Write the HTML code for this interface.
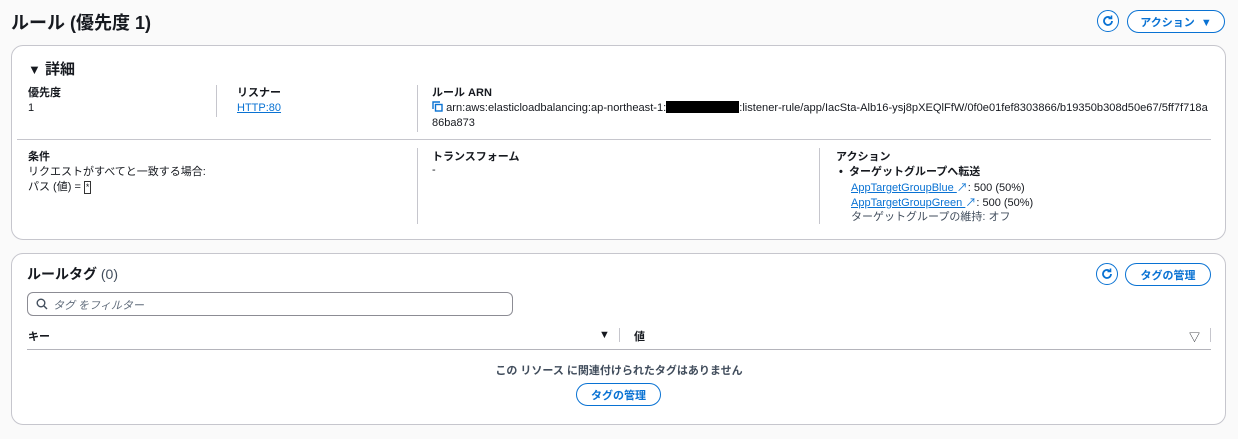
<!DOCTYPE html>
<html><head><meta charset="utf-8"><style>
*{box-sizing:border-box;margin:0;padding:0}
body{width:1238px;height:439px;background:#fafafa;font-family:"Liberation Sans","Noto Sans CJK JP",sans-serif;color:#16191f;font-size:11px;position:relative;overflow:hidden}
.a{position:absolute;white-space:nowrap}
.card{position:absolute;left:11px;width:1215px;background:#fff;border:1px solid #c6c6cd;border-radius:12px}
.b{font-weight:bold}
.lnk{color:#0972d3;text-decoration:underline}
.vd{position:absolute;width:1px;background:#c6c6cd}
.btn{position:absolute;border:1.5px solid #0972d3;border-radius:14px;color:#0972d3;font-weight:bold;font-size:11px;display:flex;align-items:center;justify-content:center;background:#fff}
.rf{position:absolute;width:22px;height:22px;border:1.5px solid #0972d3;border-radius:50%;display:flex;align-items:center;justify-content:center;background:#fff}
</style></head><body>
<div class="a b" style="left:11px;top:9px;font-size:18px">ルール (優先度 1)</div>
<div class="rf" style="left:1097px;top:10px"><svg width="12" height="12" viewBox="0 0 12 12"><path d="M10 6a4 4 0 1 1-1.3-3" fill="none" stroke="#0972d3" stroke-width="1.8"/><path d="M9.5 0.5v3h-3" fill="none" stroke="#0972d3" stroke-width="1.6"/></svg></div>
<div class="btn" style="left:1127px;top:10px;width:98px;height:23px">アクション&nbsp;&nbsp;▼</div>

<div class="card" style="top:45px;height:195px"></div>
<div class="a b" style="left:28px;top:58px;font-size:15px"><span style="font-size:13px">▼</span> 詳細</div>
<div class="a b" style="left:28px;top:84px">優先度</div>
<div class="a" style="left:28px;top:102px">1</div>
<div class="vd" style="left:216px;top:85px;height:32px"></div>
<div class="a b" style="left:237px;top:84px">リスナー</div>
<div class="a lnk" style="left:237px;top:102px">HTTP:80</div>
<div class="vd" style="left:417px;top:85px;height:47px"></div>
<div class="a b" style="left:432px;top:84px">ルール ARN</div>
<div class="a" style="left:432px;top:101px;font-size:11.1px"><svg width="11" height="11" viewBox="0 0 11 11" style="vertical-align:-1px"><path d="M1 8V1h7" fill="none" stroke="#0972d3" stroke-width="1.4"/><rect x="3.5" y="3.5" width="6.5" height="6.5" fill="none" stroke="#0972d3" stroke-width="1.4"/></svg> arn:aws:elasticloadbalancing:ap-northeast-1:<span style="display:inline-block;width:73px;height:12px;background:#000;vertical-align:-2px"></span>:listener-rule/app/IacSta-Alb16-ysj8pXEQlFfW/0f0e01fef8303866/b19350b308d50e67/5ff7f718a</div>
<div class="a" style="left:432px;top:117px">86ba873</div>
<div style="position:absolute;left:17px;top:139px;width:1194px;height:1px;background:#c6c6cd"></div>
<div class="a b" style="left:28px;top:148px">条件</div>
<div class="a" style="left:28px;top:163px">リクエストがすべてと一致する場合:</div>
<div class="a" style="left:28px;top:178px">パス (値) = <span style="display:inline-block;border:1px solid #333;padding:0 1px;font-size:9px;line-height:11px">*</span></div>
<div class="vd" style="left:417px;top:148px;height:76px"></div>
<div class="a b" style="left:432px;top:148px">トランスフォーム</div>
<div class="a" style="left:432px;top:164px">-</div>
<div class="vd" style="left:819px;top:148px;height:76px"></div>
<div class="a b" style="left:836px;top:148px">アクション</div>
<div class="a b" style="left:839px;top:163px">•&nbsp;&nbsp;ターゲットグループへ転送</div>
<div class="a" style="left:851px;top:179px"><span class="lnk">AppTargetGroupBlue </span><span style="color:#0972d3">↗</span>: 500 (50%)</div>
<div class="a" style="left:851px;top:194px"><span class="lnk">AppTargetGroupGreen </span><span style="color:#0972d3">↗</span>: 500 (50%)</div>
<div class="a" style="left:851px;top:208px;color:#414d5c">ターゲットグループの維持: オフ</div>

<div class="card" style="top:253px;height:172px"></div>
<div class="a b" style="left:27px;top:264px;font-size:14px">ルールタグ <span style="font-weight:normal;color:#414d5c">(0)</span></div>
<div class="rf" style="left:1096px;top:263px"><svg width="12" height="12" viewBox="0 0 12 12"><path d="M10 6a4 4 0 1 1-1.3-3" fill="none" stroke="#0972d3" stroke-width="1.8"/><path d="M9.5 0.5v3h-3" fill="none" stroke="#0972d3" stroke-width="1.6"/></svg></div>
<div class="btn" style="left:1125px;top:263px;width:86px;height:23px">タグの管理</div>
<div style="position:absolute;left:27px;top:292px;width:486px;height:24px;border:1px solid #8c8c94;border-radius:6px"></div>
<svg class="a" style="left:36px;top:298px" width="12" height="12" viewBox="0 0 12 12"><circle cx="5" cy="5" r="3.8" fill="none" stroke="#414d5c" stroke-width="1.4"/><path d="M8 8l3 3" stroke="#414d5c" stroke-width="1.4"/></svg>
<div class="a" style="left:53px;top:297px;color:#5f6b7a;font-style:italic">タグ をフィルター</div>
<div class="a b" style="left:28px;top:328px">キー</div>
<div class="a" style="left:599px;top:329px;font-size:11px">▼</div>
<div class="vd" style="left:619px;top:328px;height:14px"></div>
<div class="a b" style="left:634px;top:328px">値</div>
<div class="a" style="left:1189px;top:329px;font-size:11px">▽</div>
<div class="vd" style="left:1210px;top:328px;height:14px"></div>
<div style="position:absolute;left:27px;top:349px;width:1184px;height:1px;background:#b4b4bb"></div>
<div class="a b" style="left:0;width:1238px;text-align:center;top:362px;color:#414d5c">この リソース に関連付けられたタグはありません</div>
<div class="btn" style="left:576px;top:383px;width:85px;height:23px">タグの管理</div>
</body></html>
